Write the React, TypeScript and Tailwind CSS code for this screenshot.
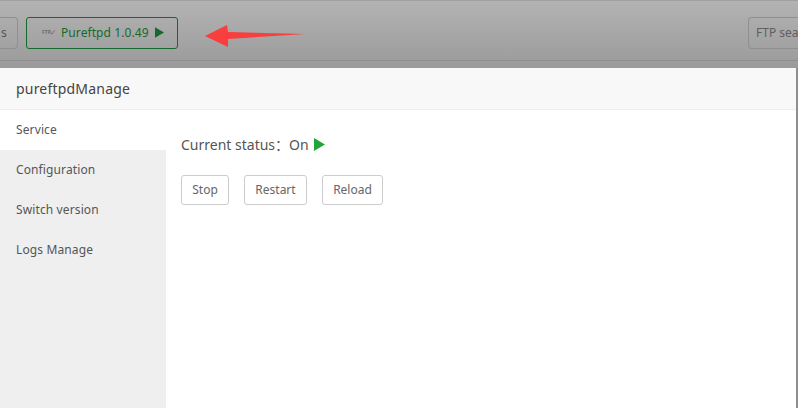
import React from "react";

function Play({ className }: { className: string }) {
  return (
    <svg viewBox="0 0 11 13" className={className} fill="currentColor">
      <path d="M0 0 L11 6.5 L0 13 Z" />
    </svg>
  );
}

export default function App() {
  const font = { fontFamily: '"Noto Sans", "Noto Sans CJK SC", "Liberation Sans", sans-serif' };
  return (
    <div className="relative w-[798px] h-[408px] overflow-hidden flex flex-col bg-[#8f8f8f]" style={font}>
      {/* dimmed toolbar */}
      <div className="h-[68px] shrink-0 flex flex-col bg-gradient-to-b from-[#b3b3b3] to-[#9a9a9a] border-t border-[#a0a0a0]">
        <div className="h-[60px] flex items-center justify-between border-b border-[#8e8e8e] pt-[4px]">
          <div className="flex items-center gap-2">
            <button className="h-[32px] w-[18px] rounded-r-[4px] border border-l-0 border-[#8f8f8f] text-[12px] text-[#555] flex items-center justify-start pl-[1px]">s</button>
            <button className="h-[32px] w-[152px] rounded-[3px] border border-[#146a2c] flex items-center pl-[15px] text-[12px] text-[#146a2c]">
              <span className="w-[12px] mr-[7px] flex items-center">
                <span className="text-[5px] font-bold text-[#6b6b6b] leading-none">FTP</span>
                <svg viewBox="0 0 6 6" className="w-[5px] h-[5px] -ml-[1px] shrink-0" fill="none" stroke="#a04040" strokeWidth="1">
                  <path d="M0.5 3.5 L2 5 L5.5 0.5" />
                </svg>
              </span>
              <span className="tracking-[0.08px]">Pureftpd 1.0.49</span>
              <Play className="w-[9px] h-[11px] ml-[6px] text-[#146a2c]" />
            </button>
          </div>
          <div className="h-[32px] w-[50px] rounded-l-[4px] border border-r-0 border-[#8f8f8f] text-[12px] text-[#5f5f5f] flex items-center pl-[7px] overflow-hidden whitespace-nowrap">FTP sea</div>
        </div>
      </div>

      {/* red annotation arrow */}
      <svg className="absolute left-[205px] top-[24px] w-[100px] h-[24px]" viewBox="0 0 100 24">
        <path d="M0 12 L22 1 L23 8 L100 10 L23 15 L23 23 Z" fill="#f93e3e" />
      </svg>

      {/* modal */}
      <div className="flex-1 mr-[2px] flex flex-col bg-white min-h-0">
        <div className="h-[42px] shrink-0 bg-[#f8f8f8] border-b border-[#eeeeee] flex items-center pl-[16px] text-[14px] text-[#444] tracking-[0.2px]">pureftpdManage</div>
        <div className="flex-1 flex min-h-0">
          <div className="w-[166px] shrink-0 bg-[#efefef] flex flex-col text-[12px] text-[#555] tracking-[0.12px]">
            <div className="h-[40px] bg-white flex items-center pl-[16px]">Service</div>
            <div className="h-[40px] flex items-center pl-[16px]">Configuration</div>
            <div className="h-[40px] flex items-center pl-[16px]">Switch version</div>
            <div className="h-[40px] flex items-center pl-[16px]">Logs Manage</div>
          </div>
          <div className="flex-1 pl-[15px] pt-[23px]">
            <div className="flex items-center h-[22px] text-[14px] text-[#555]">
              <span>Current status：</span>
              <span>On</span>
              <Play className="w-[11px] h-[13px] ml-[5px] text-[#20a53a]" />
            </div>
            <div className="flex gap-[15px] mt-[20px] text-[12px] text-[#666]">
              <button className="h-[30px] w-[48px] rounded-[3px] border border-[#cccccc]">Stop</button>
              <button className="h-[30px] w-[63px] rounded-[3px] border border-[#cccccc]">Restart</button>
              <button className="h-[30px] w-[61px] rounded-[3px] border border-[#cccccc]">Reload</button>
            </div>
          </div>
        </div>
      </div>
    </div>
  );
}
